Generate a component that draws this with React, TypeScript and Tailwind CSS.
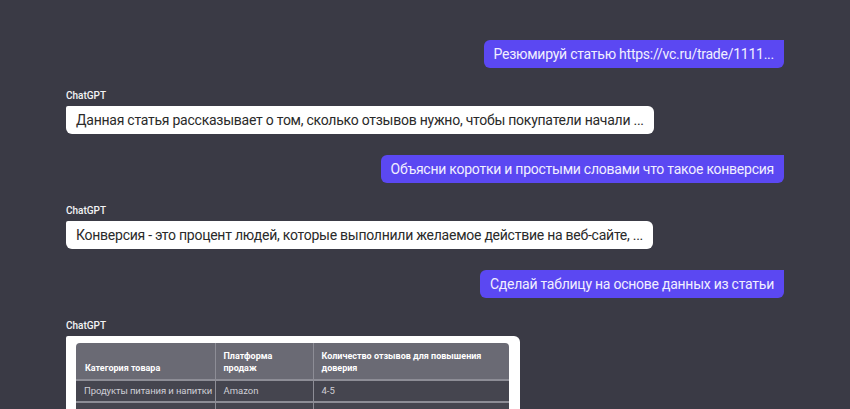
import React from "react";

const font = { fontFamily: "Roboto, 'Noto Sans', sans-serif" };

function UserMsg({ text }: { text: string }) {
  return (
    <div className="flex justify-end">
      <div className="h-[28px] rounded-[6px] rounded-tr-none bg-[#5b48f2] px-[10px] text-[14px] leading-[28px] tracking-[-0.25px] text-[#f1efff] whitespace-nowrap">
        {text}
      </div>
    </div>
  );
}

function BotMsg({ children, wide }: { children: React.ReactNode; wide?: boolean }) {
  return (
    <div className="flex flex-col items-start">
      <div className="h-[12px] text-[10px] font-medium leading-[12px] text-[#f4f4f6]">ChatGPT</div>
      <div
        className={
          wide
            ? "mt-[4px] rounded-[6px] rounded-tl-[2px] bg-white pl-[10px] pr-[11px] pt-[7px] pb-3"
            : "mt-[4px] h-[28px] rounded-[6px] rounded-tl-[2px] bg-white px-[10px] text-[14px] leading-[28px] tracking-[-0.25px] text-[#2a2a2a] whitespace-nowrap"
        }
      >
        {children}
      </div>
    </div>
  );
}

// only the first row is in view, the next one is cut by the window edge
const rows = [
  ["Продукты питания и напитки", "Amazon", "4-5"],
  ["", "", ""],
];

function ReviewTable() {
  return (
    <table className="w-[433px] table-fixed border-collapse overflow-hidden rounded-t-[4px] text-left text-[9px]">
      <colgroup>
        <col className="w-[139px]" />
        <col className="w-[98px]" />
        <col />
      </colgroup>
      <thead>
        <tr className="bg-[#6a6a74] text-white">
          <th className="h-[37px] border-r border-[#8d8d96] px-[9px] pb-[5px] align-bottom font-bold leading-[12px]">
            Категория товара
          </th>
          <th className="border-r border-[#8d8d96] px-[8px] pb-[5px] align-bottom font-bold leading-[12px]">
            Платформа
            <br />
            продаж
          </th>
          <th className="px-[8px] pb-[5px] align-bottom font-bold leading-[12px]">
            Количество отзывов для повышения
            <br />
            доверия
          </th>
        </tr>
      </thead>
      <tbody>
        {rows.map((r, i) => (
          <tr key={i} className="border-t-2 border-[#8d8d96] bg-[#45454f] text-[9.5px] text-[#cfcfd6]">
            <td className="h-[22px] whitespace-nowrap border-r border-[#8d8d96] px-[8px] tracking-[-0.1px]">{r[0]}</td>
            <td className="whitespace-nowrap border-r border-[#8d8d96] px-[8px]">{r[1]}</td>
            <td className="whitespace-nowrap px-[8px]">{r[2]}</td>
          </tr>
        ))}
      </tbody>
    </table>
  );
}

export default function App() {
  return (
    <div className="h-[409px] overflow-hidden bg-[#3a3a45] px-[66px] pt-[40px]" style={font}>
      <UserMsg text="Резюмируй статью https://vc.ru/trade/1111..." />
      <div className="mt-[22px]">
        <BotMsg>Данная статья рассказывает о том, сколько отзывов нужно, чтобы покупатели начали ...</BotMsg>
      </div>
      <div className="mt-[21px]">
        <UserMsg text="Объясни коротки и простыми словами что такое конверсия" />
      </div>
      <div className="mt-[22px]">
        <BotMsg>Конверсия - это процент людей, которые выполнили желаемое действие на веб-сайте, ...</BotMsg>
      </div>
      <div className="mt-[21px]">
        <UserMsg text="Сделай таблицу на основе данных из статьи" />
      </div>
      <div className="mt-[22px]">
        <BotMsg wide>
          <ReviewTable />
        </BotMsg>
      </div>
    </div>
  );
}
